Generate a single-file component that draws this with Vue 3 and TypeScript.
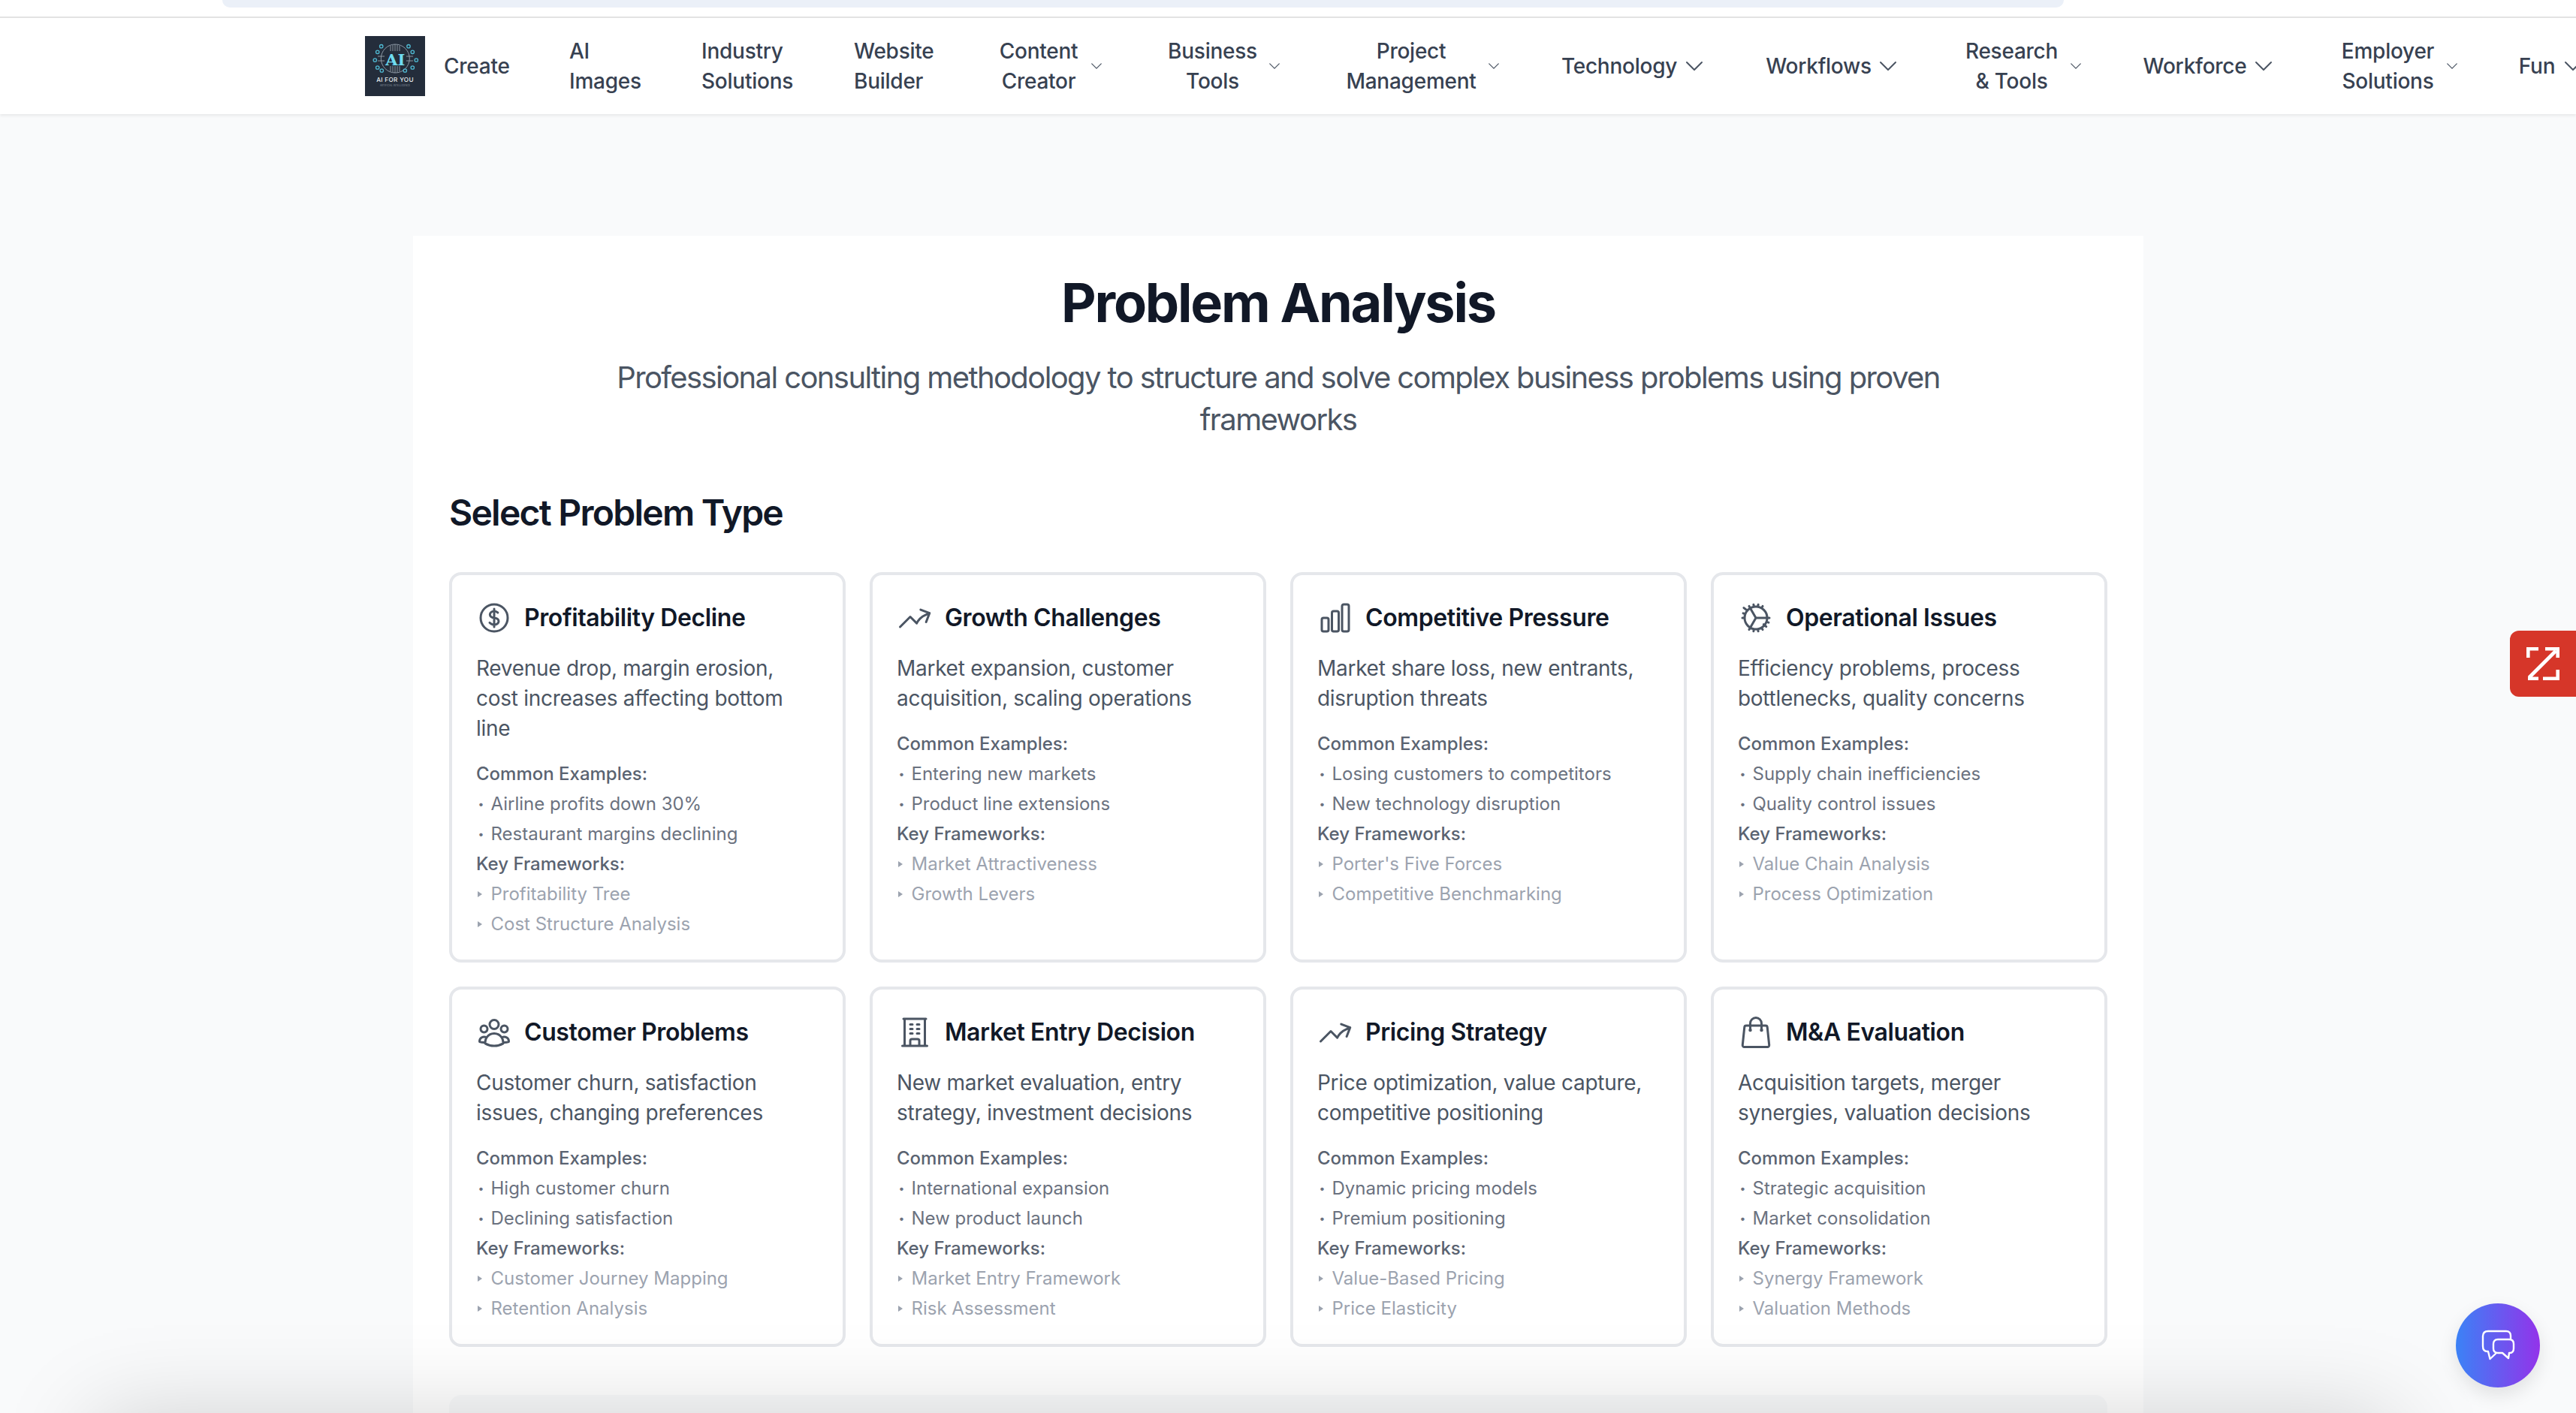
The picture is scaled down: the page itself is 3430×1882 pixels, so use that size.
<script setup lang="ts">
interface NavItem { lines: string[]; w: number; lw?: number; chev?: 'sm' | 'lg'; left?: boolean }
interface Card { title: string; icon: string; desc: string; examples: string[]; frameworks: string[] }

const navItems: NavItem[] = [
  { lines: ['Create'], w: 167, left: true },
  { lines: ['AI', 'Images'], w: 176, left: true },
  { lines: ['Industry', 'Solutions'], w: 203, left: true },
  { lines: ['Website', 'Builder'], w: 193, left: true },
  { lines: ['Content', 'Creator'], w: 226, lw: 106, chev: 'sm' },
  { lines: ['Business', 'Tools'], w: 237, lw: 117, chev: 'sm' },
  { lines: ['Project', 'Management'], w: 287, lw: 172, chev: 'sm' },
  { lines: ['Technology'], w: 273, lw: 152, chev: 'lg' },
  { lines: ['Workflows'], w: 264, lw: 137, chev: 'lg' },
  { lines: ['Research', '& Tools'], w: 238, lw: 123, chev: 'sm' },
  { lines: ['Workforce'], w: 263, lw: 135, chev: 'lg' },
  { lines: ['Employer', 'Solutions'], w: 236, lw: 123, chev: 'sm' },
  { lines: ['Fun'], w: 120, lw: 48, chev: 'lg' },
]

const icons: Record<string, string> = {
  dollar: 'M12 6v12m-3-2.818l.879.659c1.171.879 3.07.879 4.242 0 1.172-.879 1.172-2.303 0-3.182C13.536 12.219 12.768 12 12 12c-.725 0-1.45-.22-2.003-.659-1.106-.879-1.106-2.303 0-3.182s2.9-.879 4.006 0l.415.33M21 12a9 9 0 11-18 0 9 9 0 0118 0z',
  trend: 'M2.25 18L9 11.25l4.306 4.307a11.95 11.95 0 015.814-5.519l2.74-1.22m0 0l-5.94-2.28m5.94 2.28l-2.28 5.941',
  bars: 'M3 13.125C3 12.504 3.504 12 4.125 12h2.25c.621 0 1.125.504 1.125 1.125v6.75C7.5 20.496 6.996 21 6.375 21h-2.25A1.125 1.125 0 013 19.875v-6.75zM9.75 8.625c0-.621.504-1.125 1.125-1.125h2.25c.621 0 1.125.504 1.125 1.125v11.25c0 .621-.504 1.125-1.125 1.125h-2.25a1.125 1.125 0 01-1.125-1.125V8.625zM16.5 4.125c0-.621.504-1.125 1.125-1.125h2.25C20.496 3 21 3.504 21 4.125v15.75c0 .621-.504 1.125-1.125 1.125h-2.25a1.125 1.125 0 01-1.125-1.125V4.125z',
  cog: 'M4.5 12a7.5 7.5 0 0015 0m-15 0a7.5 7.5 0 1115 0m-15 0H3m16.5 0H21m-1.5 0H12m-6.894-5.772l-1.149-.964m14.343 12.036l-1.15-.964M7.501 19.795l.75-1.3m7.5-12.99l.75-1.3m-6.063 16.658l.26-1.477m2.605-14.772l.26-1.477m0 17.726l-.26-1.477M10.698 4.614l-.26-1.477M16.5 19.794l-.75-1.299M7.5 4.205L12 12m6.894 5.785l-1.149-.964M6.256 7.178l-1.15-.964m15.352 8.864l-1.41-.513M4.954 9.435l-1.41-.514M12.002 12l-3.75 6.495',
  users: 'M18 18.72a9.094 9.094 0 003.741-.479 3 3 0 00-4.682-2.72m.94 3.198l.001.031c0 .225-.012.447-.037.666A11.944 11.944 0 0112 21c-2.17 0-4.207-.576-5.963-1.584A6.062 6.062 0 016 18.719m12 0a5.971 5.971 0 00-.941-3.197m0 0A5.995 5.995 0 0012 12.75a5.995 5.995 0 00-5.058 2.772m0 0a3 3 0 00-4.681 2.72 8.986 8.986 0 003.74.477m.94-3.197a5.971 5.971 0 00-.94 3.197M15 6.75a3 3 0 11-6 0 3 3 0 016 0zm6 3a2.25 2.25 0 11-4.5 0 2.25 2.25 0 014.5 0zm-13.5 0a2.25 2.25 0 11-4.5 0 2.25 2.25 0 014.5 0z',
  office: 'M3.75 21h16.5M4.5 3h15M5.25 3v18m13.5-18v18M9 6.75h1.5m-1.5 3h1.5m-1.5 3h1.5m3-6H15m-1.5 3H15m-1.5 3H15M9 21v-3.375c0-.621.504-1.125 1.125-1.125h3.75c.621 0 1.125.504 1.125 1.125V21',
  bag: 'M15.75 10.5V6a3.75 3.75 0 10-7.5 0v4.5m11.356-1.993l1.263 12c.07.665-.45 1.243-1.119 1.243H4.25a1.125 1.125 0 01-1.12-1.243l1.264-12A1.125 1.125 0 015.513 7.5h12.974c.576 0 1.059.435 1.119 1.007zM8.625 10.5a.375.375 0 11-.75 0 .375.375 0 01.75 0zm7.5 0a.375.375 0 11-.75 0 .375.375 0 01.75 0z',
}

const cards: Card[] = [
  { title: 'Profitability Decline', icon: 'dollar', desc: 'Revenue drop, margin erosion, cost increases affecting bottom line', examples: ['Airline profits down 30%', 'Restaurant margins declining'], frameworks: ['Profitability Tree', 'Cost Structure Analysis'] },
  { title: 'Growth Challenges', icon: 'trend', desc: 'Market expansion, customer acquisition, scaling operations', examples: ['Entering new markets', 'Product line extensions'], frameworks: ['Market Attractiveness', 'Growth Levers'] },
  { title: 'Competitive Pressure', icon: 'bars', desc: 'Market share loss, new entrants, disruption threats', examples: ['Losing customers to competitors', 'New technology disruption'], frameworks: ["Porter's Five Forces", 'Competitive Benchmarking'] },
  { title: 'Operational Issues', icon: 'cog', desc: 'Efficiency problems, process bottlenecks, quality concerns', examples: ['Supply chain inefficiencies', 'Quality control issues'], frameworks: ['Value Chain Analysis', 'Process Optimization'] },
  { title: 'Customer Problems', icon: 'users', desc: 'Customer churn, satisfaction issues, changing preferences', examples: ['High customer churn', 'Declining satisfaction'], frameworks: ['Customer Journey Mapping', 'Retention Analysis'] },
  { title: 'Market Entry Decision', icon: 'office', desc: 'New market evaluation, entry strategy, investment decisions', examples: ['International expansion', 'New product launch'], frameworks: ['Market Entry Framework', 'Risk Assessment'] },
  { title: 'Pricing Strategy', icon: 'trend', desc: 'Price optimization, value capture, competitive positioning', examples: ['Dynamic pricing models', 'Premium positioning'], frameworks: ['Value-Based Pricing', 'Price Elasticity'] },
  { title: 'M&A Evaluation', icon: 'bag', desc: 'Acquisition targets, merger synergies, valuation decisions', examples: ['Strategic acquisition', 'Market consolidation'], frameworks: ['Synergy Framework', 'Valuation Methods'] },
]

const nodes: [number, number][] = [[21.7, 13.7], [16.7, 21.3], [58, 13.7], [63.3, 21.3], [13.3, 32], [68.3, 32], [16.7, 42], [63.3, 42], [22.3, 46], [53.3, 46]]
</script>

<template>
  <div class="page">
    <div class="topbar"><div class="pill"></div></div>

    <header class="nav">
      <svg class="logo" viewBox="0 0 80 80" role="img" aria-label="AI for you logo">
        <rect width="80" height="80" fill="#242d3b" />
        <circle cx="40.3" cy="30" r="19" fill="none" stroke="#8d99a6" stroke-width="1" />
        <g stroke="#a4aeb8" stroke-width="0.8">
          <path d="M34 13v7M37 12v8M40 11v9M43 12v8M46 13v7M34 40v7M37 40v8M40 40v9M43 40v8M46 40v7M17 27h9M17 33h9M55 27h9M55 33h9" />
        </g>
        <g fill="none" stroke="#4fb9d2" stroke-width="1.3">
          <circle v-for="(n, i) in nodes" :key="i" :cx="n[0]" :cy="n[1]" r="2.2" />
        </g>
        <text x="40.3" y="38.5" class="logo-ai">AI</text>
        <text x="40" y="61" class="logo-name">AI FOR YOU</text>
        <text x="40" y="66.5" class="logo-sub">ARTIFICIAL INTELLIGENCE</text>
      </svg>

      <div class="nav-items">
        <div v-for="item in navItems" :key="item.lines.join()" class="nav-item" :style="{ width: item.w + 'px' }">
          <div class="nav-label" :class="{ left: item.left }" :style="item.lw ? { width: item.lw + 'px' } : {}">
            <span v-for="l in item.lines" :key="l">{{ l }}</span>
          </div>
          <svg v-if="item.chev" class="chev" :class="item.chev" viewBox="0 0 24 24" fill="none" stroke="currentColor" stroke-width="1.5">
            <path d="M19.5 8.25l-7.5 7.5-7.5-7.5" stroke-linecap="round" stroke-linejoin="round" />
          </svg>
        </div>
      </div>
    </header>

    <main class="main">
      <section class="panel">
        <h1 class="title">Problem Analysis</h1>
        <p class="subtitle">Professional consulting methodology to structure and solve complex business problems using proven frameworks</p>
        <h2 class="section-title">Select Problem Type</h2>
        <div class="grid">
          <article v-for="c in cards" :key="c.title" class="card">
            <div class="card-head">
              <svg class="card-icon" viewBox="0 0 24 24" fill="none" stroke="currentColor" stroke-width="1.5">
                <path :d="icons[c.icon]" stroke-linecap="round" stroke-linejoin="round" />
              </svg>
              <h3 class="card-title">{{ c.title }}</h3>
            </div>
            <p class="card-desc">{{ c.desc }}</p>
            <div class="meta">
              <div class="meta-head">Common Examples:</div>
              <div v-for="e in c.examples" :key="e" class="meta-item ex"><span class="mark">•</span>{{ e }}</div>
              <div class="meta-head">Key Frameworks:</div>
              <div v-for="f in c.frameworks" :key="f" class="meta-item fw"><span class="mark tri"></span>{{ f }}</div>
            </div>
          </article>
        </div>
        <div class="next-box"></div>
      </section>
    </main>

    <div class="bottom-shade"></div>

    <div class="zoho">
      <svg viewBox="0 0 44 44" fill="none" stroke="#fff" stroke-width="4.6">
        <path d="M2.3 14V2.3H16M2 41.7H16M22 41.7H41.7V30M25 2.3H41.7V14M3.5 40.5L39 5" />
      </svg>
    </div>

    <div class="chat">
      <svg viewBox="0 0 48 48" fill="none" stroke="#fff" stroke-width="2.4" stroke-linejoin="round" stroke-linecap="round">
        <path d="M41 15V11Q41 5 35 5H11Q4 5 4 12V25Q4 32 10 32H11L13.5 42L22 34" />
        <path d="M24 16H39Q45 16 45 22V28Q45 34 40 34H39L38 41L30 34H24Q18 34 18 28V22Q18 16 24 16Z" />
      </svg>
    </div>
  </div>
</template>

<style>
html, body { margin: 0; padding: 0; overflow: hidden; background: #f9fafb; }
</style>

<style scoped>
.page {
  position: relative;
  width: 3430px;
  height: 1882px;
  overflow: hidden;
  background: #f9fafb;
  font-family: Inter, "Liberation Sans", sans-serif;
}
.topbar {
  height: 22px;
  background: #fff;
  border-bottom: 2px solid #e3e3e3;
  padding-left: 296px;
}
.pill {
  width: 2452px;
  height: 10px;
  background: #ebf0f8;
  border-radius: 0 0 20px 20px;
}
.nav {
  display: flex;
  align-items: center;
  height: 128px;
  padding-left: 486px;
  background: #fff;
  box-shadow: 0 2px 4px rgba(0, 0, 0, 0.08);
  position: relative;
  overflow: hidden;
  clip-path: inset(0 0 -10px 0);
}
.logo { width: 80px; height: 80px; flex: none; margin-right: 25px; }
.logo-ai { font: 700 21px "DejaVu Serif", serif; fill: #6fdcf0; text-anchor: middle; }
.logo-name { font: 500 8.2px Inter, sans-serif; fill: #e8edf0; text-anchor: middle; letter-spacing: 0.3px; }
.logo-sub { font: 400 2.8px Inter, sans-serif; fill: #8f9ba6; text-anchor: middle; letter-spacing: 0.2px; }
.nav-items { display: flex; align-items: center; flex: none; }
.nav-item {
  display: flex;
  align-items: center;
  flex: none;
  font-size: 28px;
  line-height: 40px;
  font-weight: 500;
  letter-spacing: -0.25px;
  color: #374151;
  white-space: nowrap;
}
.nav-label { display: flex; flex-direction: column; align-items: center; flex: none; text-align: center; }
.nav-label.left { align-items: flex-start; }
.chev { flex: none; color: #4b5563; }
.chev.lg { width: 32px; height: 32px; margin-left: 8px; }
.chev.sm { width: 20px; height: 20px; margin-left: 14px; }
.main { display: flex; justify-content: center; width: 3404px; padding-top: 162px; }
.panel {
  width: 2304px;
  flex: none;
  box-sizing: border-box;
  padding: 49px 48px 48px;
  background: #fff;
  height: 1800px;
}
.title {
  margin: 0 0 32px;
  font-size: 72px;
  line-height: 80px;
  font-weight: 700;
  letter-spacing: -2.2px;
  color: #111827;
  text-align: center;
}
.subtitle {
  margin: 0 auto 64px;
  max-width: 1792px;
  font-size: 40px;
  line-height: 56px;
  letter-spacing: -1.6px;
  color: #4b5563;
  text-align: center;
}
.section-title {
  margin: 0 0 47px;
  font-size: 48px;
  line-height: 64px;
  font-weight: 600;
  letter-spacing: -1.75px;
  color: #111827;
}
.grid { display: grid; grid-template-columns: repeat(4, 528px); gap: 32px; }
.card {
  box-sizing: border-box;
  padding: 33px 32px 31px;
  border: 4px solid #e5e7eb;
  border-radius: 16px;
  background: #fff;
}
.card-head { display: flex; align-items: center; gap: 16px; margin-bottom: 23px; }
.card-icon { width: 48px; height: 48px; flex: none; color: #4b5563; }
.card-title { margin: 0; font-size: 32px; line-height: 48px; font-weight: 600; letter-spacing: -0.4px; color: #111827; }
.card-desc { margin: 0 0 25px; font-size: 28px; line-height: 40px; letter-spacing: -0.28px; color: #4b5563; }
.meta { display: flex; flex-direction: column; gap: 8px; font-size: 24px; line-height: 32px; }
.meta-head { font-weight: 500; color: #5a6371; }
.meta-item { display: flex; align-items: center; }
.meta-item.ex { color: #6b7280; }
.meta-item.fw { color: #9ca3af; }
.mark { flex: none; width: 19.5px; padding-left: 2.5px; box-sizing: border-box; font-size: 14px; }
.mark.tri { position: relative; height: 32px; }
.mark.tri::before {
  content: "";
  position: absolute;
  left: 2px;
  top: 12px;
  border-left: 6px solid #9ca3af;
  border-top: 4.5px solid transparent;
  border-bottom: 4.5px solid transparent;
}
.next-box { margin-top: 64px; height: 200px; background: #f9fafb; border-radius: 16px; }
.bottom-shade {
  position: absolute;
  left: 127px;
  width: 3060px;
  top: 1890px;
  height: 400px;
  box-shadow: 0 0 120px 0 rgba(0, 0, 0, 0.18);
}
.zoho {
  position: absolute;
  right: 0;
  top: 840px;
  width: 88px;
  height: 88px;
  box-sizing: border-box;
  padding: 22px 22px 22px 22px;
  background: #d63629;
  border-radius: 12px 0 0 12px;
}
.zoho svg { display: block; width: 44px; height: 44px; }
.chat {
  position: absolute;
  left: 3270px;
  top: 1736px;
  width: 112px;
  height: 112px;
  display: flex;
  align-items: center;
  justify-content: center;
  border-radius: 50%;
  background: linear-gradient(90deg, #3b82f6, #9333ea);
  box-shadow: 0 10px 24px rgba(0, 0, 0, 0.1);
}
.chat svg { width: 48px; height: 48px; }
</style>
